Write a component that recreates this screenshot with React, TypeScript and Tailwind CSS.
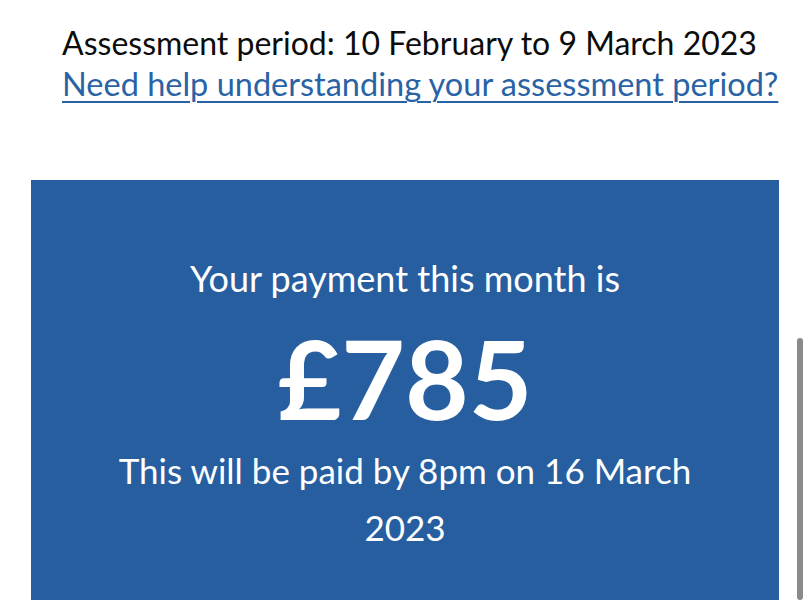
export default function App() {
  return (
    <div className="relative min-h-[600px] bg-white font-['Lato',sans-serif] text-[#0b0c0c]">
      <div className="px-[31px] pt-[22px]">
        <div className="pl-[31px]">
          <p className="text-[32px] leading-[41px]">Assessment period: 10 February to 9 March 2023</p>
          <a href="#" className="text-[32.5px] leading-[41px] text-[#2a63a5] underline decoration-[2px] underline-offset-[5px]">
            Need help understanding your assessment period?
          </a>
        </div>
        <div className="mt-[76px] bg-[#265ea0] px-10 pt-[74px] pb-[90px] text-center text-white">
          <p className="text-[36px] leading-[48px]">Your payment this month is</p>
          <p className="mt-[20px] text-[110px] font-bold leading-[110px]">£785</p>
          <p className="mx-auto mt-[10px] max-w-[600px] text-[35px] leading-[57px]">This will be paid by 8pm on 16 March 2023</p>
        </div>
      </div>
      <div className="pointer-events-none fixed top-[338px] right-[7px] h-[262px] w-[6px] rounded-full bg-[#8a8a8a]" />
    </div>
  );
}
